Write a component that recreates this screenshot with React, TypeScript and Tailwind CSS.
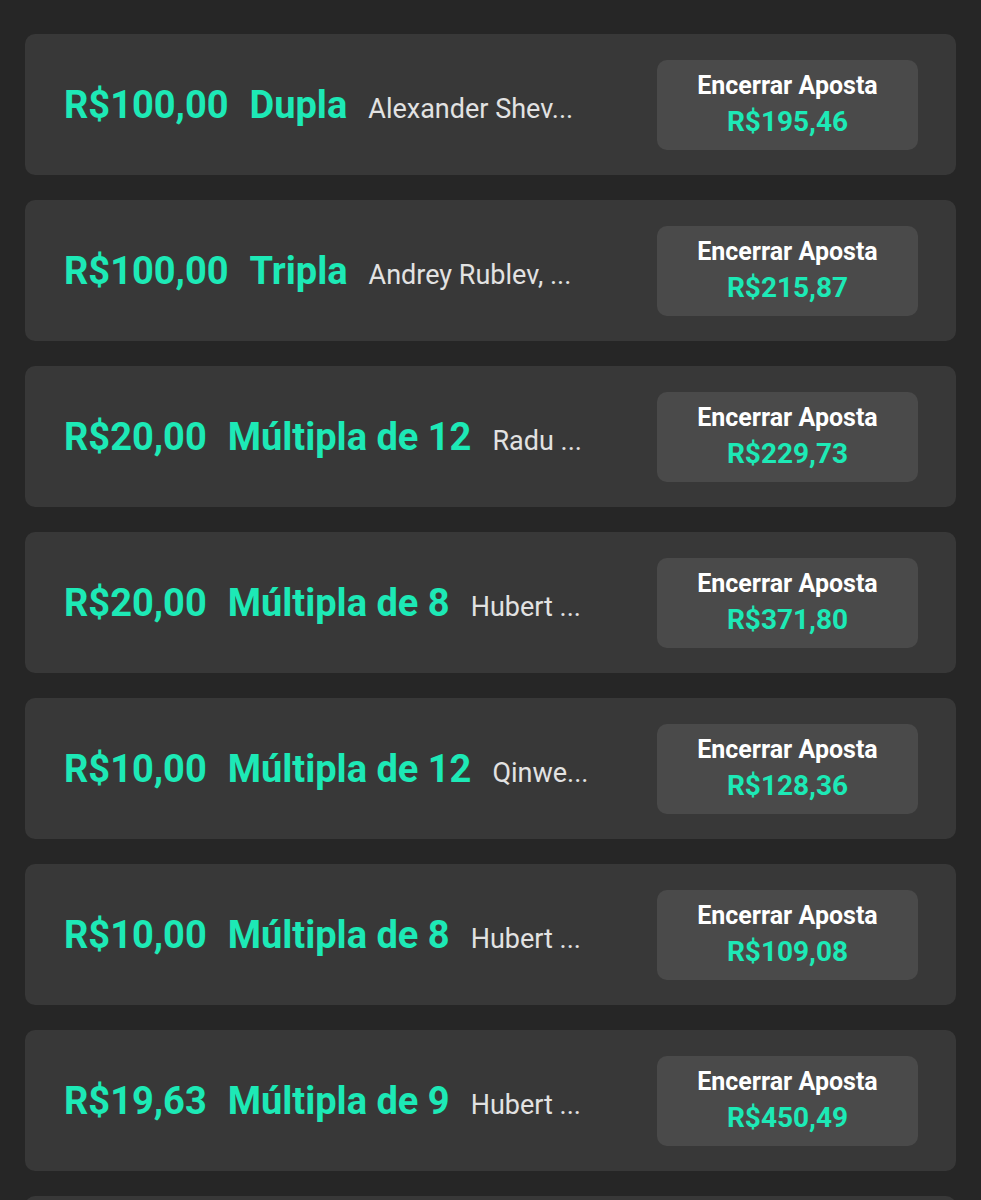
import React from "react";

const bets = [
  { stake: "R$100,00", type: "Dupla", name: "Alexander Shev...", value: "R$195,46" },
  { stake: "R$100,00", type: "Tripla", name: "Andrey Rublev, ...", value: "R$215,87" },
  { stake: "R$20,00", type: "Múltipla de 12", name: "Radu ...", value: "R$229,73" },
  { stake: "R$20,00", type: "Múltipla de 8", name: "Hubert ...", value: "R$371,80" },
  { stake: "R$10,00", type: "Múltipla de 12", name: "Qinwe...", value: "R$128,36" },
  { stake: "R$10,00", type: "Múltipla de 8", name: "Hubert ...", value: "R$109,08" },
  { stake: "R$19,63", type: "Múltipla de 9", name: "Hubert ...", value: "R$450,49" },
];

export default function App() {
  return (
    <div
      className="h-[1200px] overflow-hidden bg-[#262626] px-[25px] pt-[34px] flex flex-col gap-[25px]"
      style={{ fontFamily: "Roboto, 'Noto Sans', sans-serif" }}
    >
      {bets.map((b, i) => (
        <div
          key={i}
          className="h-[141px] shrink-0 bg-[#383838] rounded-[10px] pl-[39px] pr-[38px] flex items-center"
        >
          <div className="flex items-baseline flex-1 min-w-0 mr-[40px]">
            <span className="text-[#1de9b6] font-bold text-[38px] leading-none whitespace-nowrap">{b.stake}</span>
            <span className="text-[#1de9b6] font-bold text-[38px] leading-none whitespace-nowrap ml-[21px]">{b.type}</span>
            <span className="text-[#e2e2e2] text-[27px] leading-none ml-[21px] whitespace-nowrap">{b.name}</span>
          </div>
          <div className="w-[261px] h-[90px] shrink-0 bg-[#4a4a4a] rounded-[10px] flex flex-col items-center justify-center pb-[2px]">
            <span className="text-white font-bold text-[25px] leading-[36px]">Encerrar Aposta</span>
            <span className="text-[#1de9b6] font-bold text-[28px] leading-[36px]">{b.value}</span>
          </div>
        </div>
      ))}
      <div className="h-[141px] shrink-0 bg-[#383838] rounded-[10px]" />
    </div>
  );
}
